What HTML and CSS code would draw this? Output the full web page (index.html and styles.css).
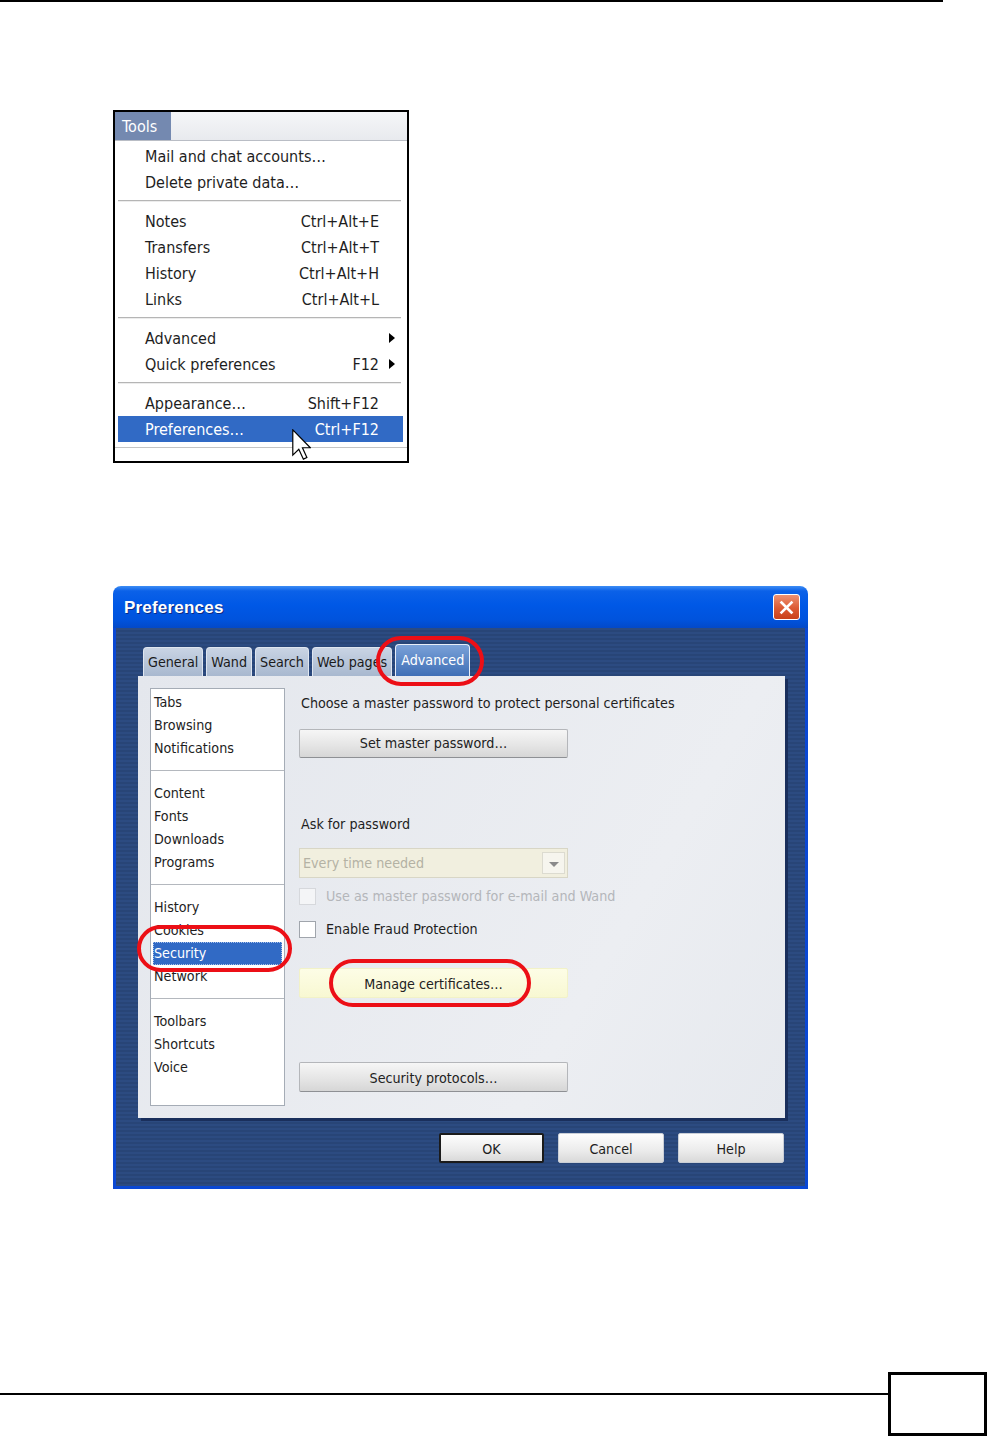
FILE: index.html
```html
<!DOCTYPE html>
<html lang="en">
<head>
  <meta charset="UTF-8" />
  <meta name="viewport" content="width=device-width, initial-scale=1.0" />
  <title>Tools menu and Preferences</title>
  <link rel="stylesheet" href="styles.css">
</head>
<body>
  <div class="page-rule"></div>

  <!-- Tools menu, opened -->
  <div class="menu">
    <div class="menu-bar"><span class="menu-title">Tools</span></div>
    <ul class="menu-list">
      <li class="menu-item"><span>Mail and chat accounts…</span><span class="key"></span><span></span></li>
      <li class="menu-item"><span>Delete private data…</span><span class="key"></span><span></span></li>
      <li class="menu-sep"></li>
      <li class="menu-item"><span>Notes</span><span class="key">Ctrl+Alt+E</span><span></span></li>
      <li class="menu-item"><span>Transfers</span><span class="key">Ctrl+Alt+T</span><span></span></li>
      <li class="menu-item"><span>History</span><span class="key">Ctrl+Alt+H</span><span></span></li>
      <li class="menu-item"><span>Links</span><span class="key">Ctrl+Alt+L</span><span></span></li>
      <li class="menu-sep"></li>
      <li class="menu-item"><span>Advanced</span><span class="key"></span><span class="sub"></span></li>
      <li class="menu-item"><span>Quick preferences</span><span class="key">F12</span><span class="sub"></span></li>
      <li class="menu-sep"></li>
      <li class="menu-item"><span>Appearance…</span><span class="key">Shift+F12</span><span></span></li>
      <li class="menu-item active"><span>Preferences…</span><span class="key">Ctrl+F12</span><span></span></li>
    </ul>
    <div class="menu-foot"></div>
    <svg class="cursor" width="19" height="31" viewBox="0 0 12 19.5">
      <path d="M0.5 0.5 L0.5 16.5 L4.3 12.8 L7.2 19 L9.4 18 L6.6 11.8 L11.6 11.8 Z" fill="#fff" stroke="#000" stroke-width="0.75" stroke-linejoin="miter"/>
    </svg>
  </div>

  <!-- Preferences dialog -->
  <div class="dialog">
    <div class="titlebar">
      <h2>Preferences</h2>
      <span class="close-btn">
        <svg width="15" height="15" viewBox="0 0 15 15"><path d="M2.5 2.5 L12.5 12.5 M12.5 2.5 L2.5 12.5" stroke="#fff" stroke-width="2.6" stroke-linecap="square"/></svg>
      </span>
    </div>
    <div class="dialog-body">
      <div class="tabs">
        <span class="tab">General</span>
        <span class="tab">Wand</span>
        <span class="tab">Search</span>
        <span class="tab">Web pages</span>
        <span class="tab selected">Advanced</span>
      </div>
      <div class="panel">
        <ul class="side-list">
          <li>Tabs</li>
          <li>Browsing</li>
          <li>Notifications</li>
          <li class="side-sep"></li>
          <li>Content</li>
          <li>Fonts</li>
          <li>Downloads</li>
          <li>Programs</li>
          <li class="side-sep"></li>
          <li>History</li>
          <li>Cookies</li>
          <li class="selected">Security</li>
          <li>Network</li>
          <li class="side-sep"></li>
          <li>Toolbars</li>
          <li>Shortcuts</li>
          <li>Voice</li>
        </ul>
        <div class="pane">
          <div class="pane-text intro">Choose a master password to protect personal certificates</div>
          <div class="push master-btn">Set master password…</div>
          <div class="pane-text ask-label">Ask for password</div>
          <div class="select">
            <span class="select-value">Every time needed</span>
            <span class="select-arrow"></span>
          </div>
          <label class="check-row disabled first-check"><span class="box"></span>Use as master password for e-mail and Wand</label>
          <label class="check-row second-check"><span class="box"></span>Enable Fraud Protection</label>
          <div class="push hover manage-btn">Manage certificates…</div>
          <div class="push protocols-btn">Security protocols…</div>
        </div>
      </div>
      <div class="dialog-buttons">
        <span class="btn default">OK</span>
        <span class="btn">Cancel</span>
        <span class="btn">Help</span>
      </div>
    </div>

    <!-- red call-out rings -->
    <div class="ring ring-tab"></div>
    <div class="ring ring-list"></div>
    <div class="ring ring-manage"></div>
  </div>

  <div class="page-foot">
    <div class="foot-line"></div>
    <div class="page-box"></div>
  </div>
</body>
</html>
```

FILE: styles.css
```css
/* Base */
* { box-sizing: border-box; }
body {
  margin: 0;
  width: 987px;
  height: 1438px;
  overflow: hidden;
  display: flex;
  flex-direction: column;
  background: #fff;
  color: #1e1e1e;
  font-family: Tahoma, "DejaVu Sans Condensed", "Liberation Sans", sans-serif;
}
.page-rule {
  flex-shrink: 0;
  width: 943px;
  height: 2px;
  background: #000;
}

/* Tools menu */
.menu {
  position: relative;
  flex-shrink: 0;
  display: flex;
  flex-direction: column;
  width: 296px;
  height: 353px;
  margin: 108px 0 0 113px;
  border: 2px solid #000;
  background: #fff;
  overflow: hidden;
  font-size: 16px;
}
.menu-bar {
  display: flex;
  height: 29px;
  background: linear-gradient(#f5f6f8, #e8eaee);
  border-bottom: 1px solid #b9bdc5;
}
.menu-title {
  width: 56px;
  padding-left: 7px;
  line-height: 29px;
  background: #7489b0;
  color: #fff;
}
.menu-list {
  list-style: none;
  margin: 2px 0 0;
  padding: 0;
}
.menu-item {
  display: grid;
  grid-template-columns: 1fr auto 22px;
  align-items: center;
  height: 26px;
  padding: 0 6px 0 30px;
}
.menu-item.active {
  margin: 0 4px 0 3px;
  padding: 0 2px 0 27px;
  background: #316ac5;
  color: #fff;
}
.menu-item .sub {
  width: 0;
  height: 0;
  margin-left: 10px;
  border-left: 6px solid #000;
  border-top: 5px solid transparent;
  border-bottom: 5px solid transparent;
}
.menu-sep {
  height: 2px;
  margin: 5px 6px 6px 3px;
  border-top: 1px solid #b5b5b5;
  border-bottom: 1px solid #ececec;
}
.menu-foot {
  margin-top: 5px;
  border-top: 1px solid #c4c4c4;
}
.cursor {
  position: absolute;
  left: 177px;
  top: 317px;
}

/* Preferences dialog */
.dialog {
  position: relative;
  flex-shrink: 0;
  display: flex;
  flex-direction: column;
  width: 695px;
  height: 603px;
  margin: 123px 0 0 113px;
  font-size: 14.2px;
}
.titlebar {
  display: flex;
  align-items: center;
  justify-content: space-between;
  height: 42px;
  padding: 2px 8px 0 11px;
  border-radius: 8px 8px 0 0;
  background: linear-gradient(#3d8df5 0%, #0b61e8 12%, #0058e6 45%, #0053dd 80%, #0349c8 100%);
}
.titlebar h2 {
  margin: 0;
  color: #fff;
  font: bold 17px "Liberation Sans", sans-serif;
  letter-spacing: 0.2px;
  text-shadow: 1px 1px 0 #0b2c85;
}
.close-btn {
  display: flex;
  align-items: center;
  justify-content: center;
  width: 27px;
  height: 26px;
  margin-top: -2px;
  border: 1px solid #fff;
  border-radius: 3px;
  background: linear-gradient(#ee9272, #dc5a33 55%, #c9411a);
}
.dialog-body {
  flex: 1;
  display: flex;
  flex-direction: column;
  padding: 16px 20px 0 22px;
  border: 3px solid #0a48d4;
  border-top: 0;
  background: repeating-linear-gradient(#2c4b81 0 2px, #284577 2px 4px);
}

/* tabs */
.tabs {
  display: flex;
  align-items: flex-end;
  gap: 3px;
  height: 32px;
  padding-left: 5px;
}
.tab {
  height: 29px;
  padding: 0 4px;
  line-height: 29px;
  border: 1px solid #dfe6f0;
  border-bottom: 0;
  border-radius: 4px 4px 0 0;
  background: linear-gradient(#c9d4e4, #a8b8cf);
  color: #1a1a1a;
}
.tab.selected {
  height: 32px;
  padding: 0 5px;
  line-height: 30px;
  border-color: #e8eef8;
  background: linear-gradient(#7aa1d8, #3f6fb6);
  color: #fff;
}

/* tab page */
.panel {
  display: flex;
  gap: 14px;
  height: 442px;
  padding: 12px;
  background: linear-gradient(120deg, #e4e7ed, #eceef2 70%, #e6e9ee);
  box-shadow: 3px 3px 0 #1a2f5c;
}
.side-list {
  list-style: none;
  width: 135px;
  margin: 0;
  padding: 2px 0 0;
  border: 1px solid #a5acb6;
  background: #fff;
}
.side-list li {
  height: 23px;
  padding-left: 3px;
  line-height: 23px;
}
.side-list li.side-sep {
  height: 1px;
  margin: 10px 0 11px;
  background: #b4b8be;
}
.side-list li.selected {
  margin: 0 2px;
  padding-left: 1px;
  background: #316ac5;
  outline: 1px dotted #a8c2ea;
  outline-offset: -1px;
  color: #fff;
}
.pane {
  display: flex;
  flex-direction: column;
  width: 269px;
}
.pane-text {
  padding-left: 2px;
  line-height: 18px;
  white-space: nowrap;
}
.intro { margin-top: 6px; }
.ask-label { margin-top: 57px; }
.push {
  height: 29px;
  line-height: 27px;
  text-align: center;
  border: 1px solid #b4b6ba;
  border-bottom-color: #8e9094;
  border-radius: 2px;
  background: linear-gradient(#f6f6f6, #e4e4e4 60%, #d6d6d6);
  color: #222;
}
.push.hover {
  border-color: #f2f2c8;
  background: linear-gradient(#fdfde6, #f8f8d2);
}
.master-btn { margin-top: 17px; }
.manage-btn { margin-top: 30px; height: 30px; line-height: 30px; }
.protocols-btn { margin-top: 64px; height: 30px; line-height: 30px; }
.select {
  display: flex;
  height: 30px;
  margin-top: 15px;
  border: 1px solid #d8d6c6;
  background: #f1efdf;
}
.select-value {
  flex: 1;
  padding-left: 3px;
  line-height: 28px;
  color: #b4b2a4;
}
.select-arrow {
  position: relative;
  width: 23px;
  margin: 3px 2px 3px 0;
  border: 1px solid #dcdbd0;
  background: #f6f5ee;
}
.select-arrow::after {
  content: "";
  position: absolute;
  left: 6px;
  top: 9px;
  border-top: 5px solid #8a8a8a;
  border-left: 5px solid transparent;
  border-right: 5px solid transparent;
}
.check-row {
  display: flex;
  align-items: center;
  gap: 10px;
  height: 18px;
  white-space: nowrap;
}
.check-row .box {
  flex-shrink: 0;
  width: 17px;
  height: 17px;
  border: 1px solid #a0a5ac;
  background: #fff;
}
.check-row.disabled { color: #b4b6ba; }
.check-row.disabled .box {
  border-color: #d6d8dc;
  background: #f4f5f7;
}
.first-check { margin-top: 9px; }
.second-check { margin-top: 15px; }

/* OK / Cancel / Help */
.dialog-buttons {
  display: flex;
  justify-content: flex-end;
  gap: 14px;
  margin-top: 15px;
  padding-right: 1px;
}
.btn {
  width: 106px;
  height: 30px;
  line-height: 30px;
  text-align: center;
  border: 1px solid #c9ced6;
  border-radius: 2px;
  background: linear-gradient(#fdfdfd, #ebebeb 60%, #d9d9d9);
  color: #1e1e1e;
}
.btn.default {
  width: 105px;
  border: 2px solid #1b1b1b;
  line-height: 28px;
}

/* call-out rings drawn over the screenshot */
.ring {
  position: absolute;
  border: 4px solid #ec0f16;
  border-radius: 25px;
  pointer-events: none;
}
.ring-tab { left: 263px; top: 50px; width: 108px; height: 50px; }
.ring-list { left: 24px; top: 339px; width: 155px; height: 47px; }
.ring-manage { left: 216px; top: 373px; width: 202px; height: 48px; }

/* page footer */
.page-foot {
  display: flex;
  align-items: flex-start;
  height: 65px;
  margin-top: auto;
  margin-bottom: 1px;
}
.foot-line {
  flex: 1;
  height: 2px;
  margin-top: 21px;
  background: #000;
}
.page-box {
  width: 99px;
  height: 64px;
  border: 3px solid #000;
}
```
